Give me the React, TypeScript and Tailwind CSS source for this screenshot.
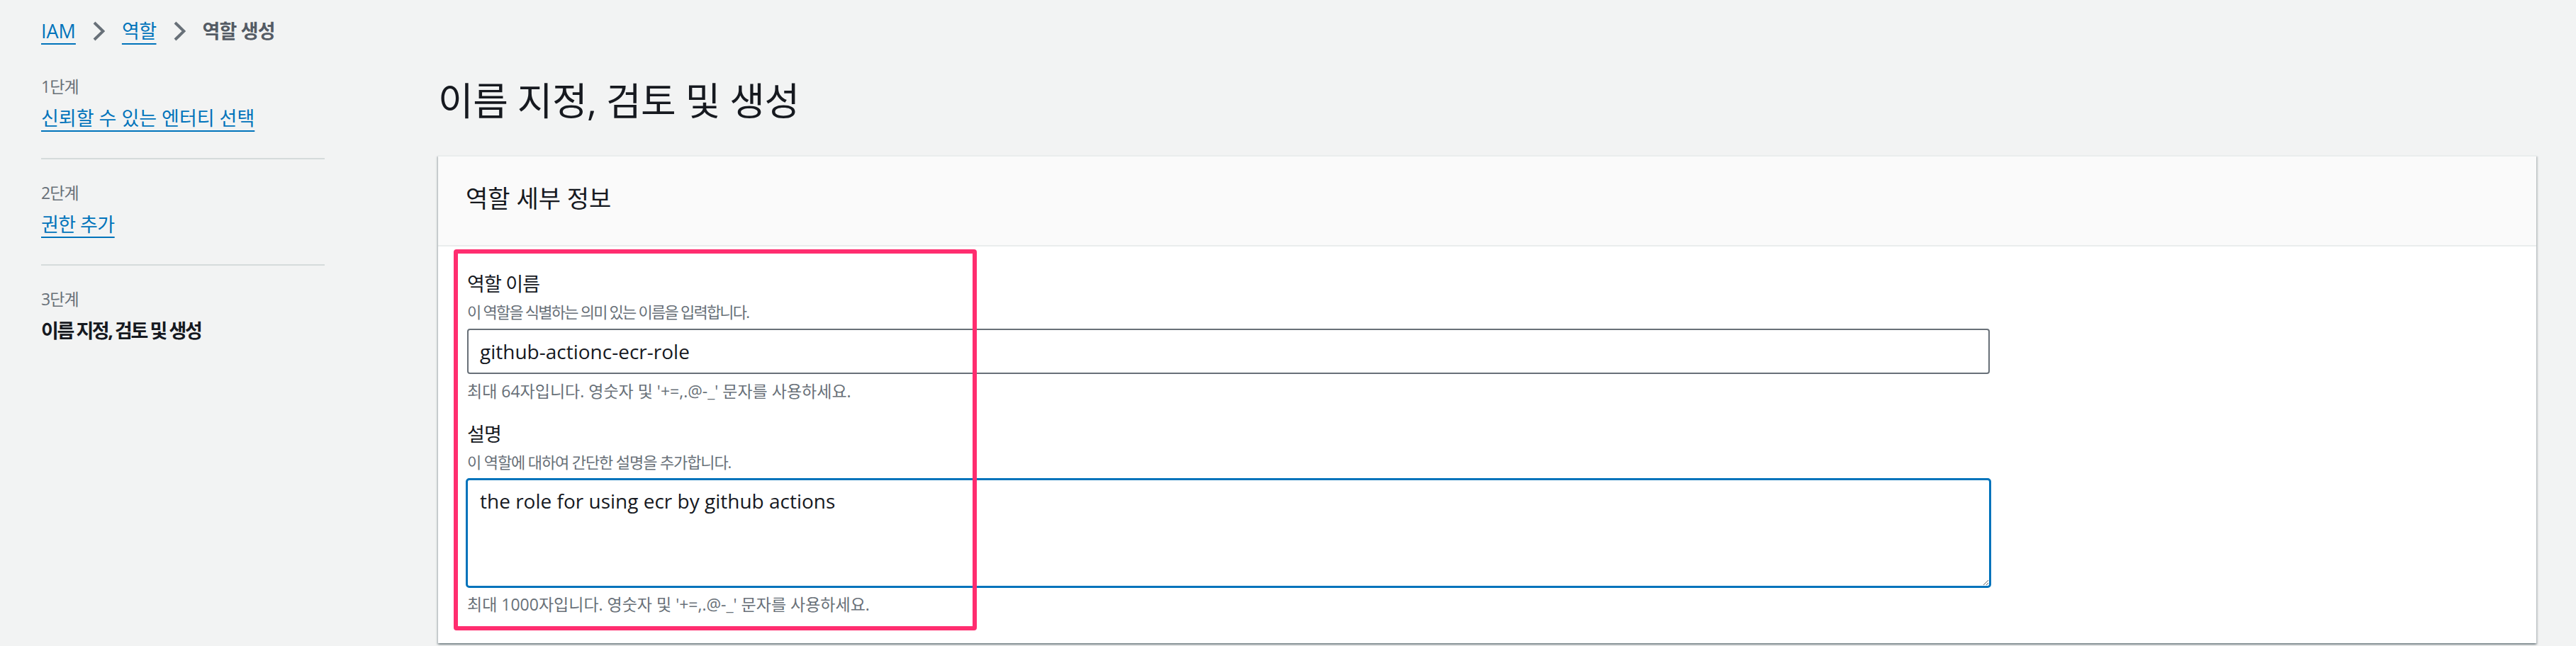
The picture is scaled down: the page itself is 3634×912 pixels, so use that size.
import React from "react";

function Chevron() {
  return (
    <svg width="17" height="28" viewBox="0 0 17 28" className="shrink-0 mx-[24px]">
      <path d="M2 2 L14.5 14 L2 26" fill="none" stroke="#687078" strokeWidth="4" />
    </svg>
  );
}

function Step({
  label,
  children,
  first,
  last,
}: {
  label: string;
  children: React.ReactNode;
  first?: boolean;
  last?: boolean;
}) {
  return (
    <div
      className={
        (first ? "" : "pt-[31px] ") +
        (last ? "" : "pb-[36px] border-b-2 border-[#d5dbdb]")
      }
    >
      <div className="text-[23px] leading-[32px] text-[#687078] tracking-[-0.04em]">{label}</div>
      <div className="mt-[9px] text-[27px] leading-[40px]">{children}</div>
    </div>
  );
}

export default function App() {
  return (
    <div className="w-[3634px] h-[912px] overflow-hidden bg-[#f2f3f3] font-['Open_Sans','Noto_Sans_CJK_KR',sans-serif] text-[#16191f]">
      <nav className="flex items-center h-[40px] mt-[24px] pl-[58px] text-[27px] leading-[40px]">
        <a className="text-[#0073bb] underline decoration-2 underline-offset-[7px]">IAM</a>
        <Chevron />
        <a className="text-[#0073bb] underline decoration-2 underline-offset-[7px] tracking-[-0.02em]">역할</a>
        <Chevron />
        <span className="font-bold text-[#545b64] tracking-[-0.03em]">역할 생성</span>
      </nav>

      <div className="flex">
        <aside className="w-[400px] ml-[58px] mt-[42px] shrink-0">
          <Step label="1단계" first>
            <a className="text-[#0073bb] underline decoration-2 underline-offset-[7px]">신뢰할 수 있는 엔터티 선택</a>
          </Step>
          <Step label="2단계">
            <a className="text-[#0073bb] underline decoration-2 underline-offset-[7px] tracking-[-0.02em]">권한 추가</a>
          </Step>
          <Step label="3단계" last>
            <span className="font-bold tracking-[-0.09em]">이름 지정, 검토 및 생성</span>
          </Step>
        </aside>

        <main className="ml-[160px] w-[2960px] shrink-0">
          <h1 className="mt-[46px] text-[54px] leading-[64px] font-normal tracking-[-0.01em]">이름 지정, 검토 및 생성</h1>

          <section className="mt-[45px] bg-white border-t-2 border-[#eaeded] shadow-[0_2px_2px_0_rgba(0,28,36,0.3),2px_2px_2px_0_rgba(0,28,36,0.15),-2px_2px_2px_0_rgba(0,28,36,0.15)]">
            <div className="bg-[#fafafa] border-b-2 border-[#eaeded] pl-[39px] pt-[37px] pb-[44px]">
              <h2 className="text-[34px] leading-[44px] font-normal">역할 세부 정보</h2>
            </div>

            <div className="relative pl-[41px] pt-[35px] pb-[39px]">
              <label className="block text-[27px] leading-[36px] tracking-[-0.03em]">역할 이름</label>
              <div className="mt-[5px] text-[22px] leading-[32px] text-[#687078] tracking-[-0.08em]">
                이 역할을 식별하는 의미 있는 이름을 입력합니다.
              </div>
              <input
                readOnly
                value="github-actionc-ecr-role"
                className="mt-[8px] block w-[2148px] h-[64px] border-2 border-[#687078] rounded-[4px] px-[16px] text-[28px] text-[#16191f] bg-white outline-none"
              />
              <div className="mt-[8px] text-[23px] leading-[32px] text-[#687078]">
                최대 64자입니다. 영숫자 및 '+=,.@-_' 문자를 사용하세요.
              </div>

              <label className="block mt-[27px] text-[27px] leading-[36px] tracking-[-0.03em]">설명</label>
              <div className="mt-[5px] text-[22px] leading-[32px] text-[#687078] tracking-[-0.05em]">
                이 역할에 대하여 간단한 설명을 추가합니다.
              </div>
              <textarea
                readOnly
                value="the role for using ecr by github actions"
                className="mt-[7px] -ml-[2px] block w-[2152px] h-[155px] border-[3px] border-[#0073bb] rounded-[5px] px-[17px] pt-[9px] text-[28px] leading-[40px] text-[#16191f] bg-white outline-none resize"
              />
              <div className="mt-[7px] text-[23px] leading-[32px] text-[#687078]">
                최대 1000자입니다. 영숫자 및 '+=,.@-_' 문자를 사용하세요.
              </div>

              <div className="absolute left-[22px] top-[4px] w-[738px] h-[538px] border-[6px] border-[#ff2d6f] rounded-[4px] pointer-events-none" />
            </div>
          </section>
        </main>
      </div>
    </div>
  );
}
